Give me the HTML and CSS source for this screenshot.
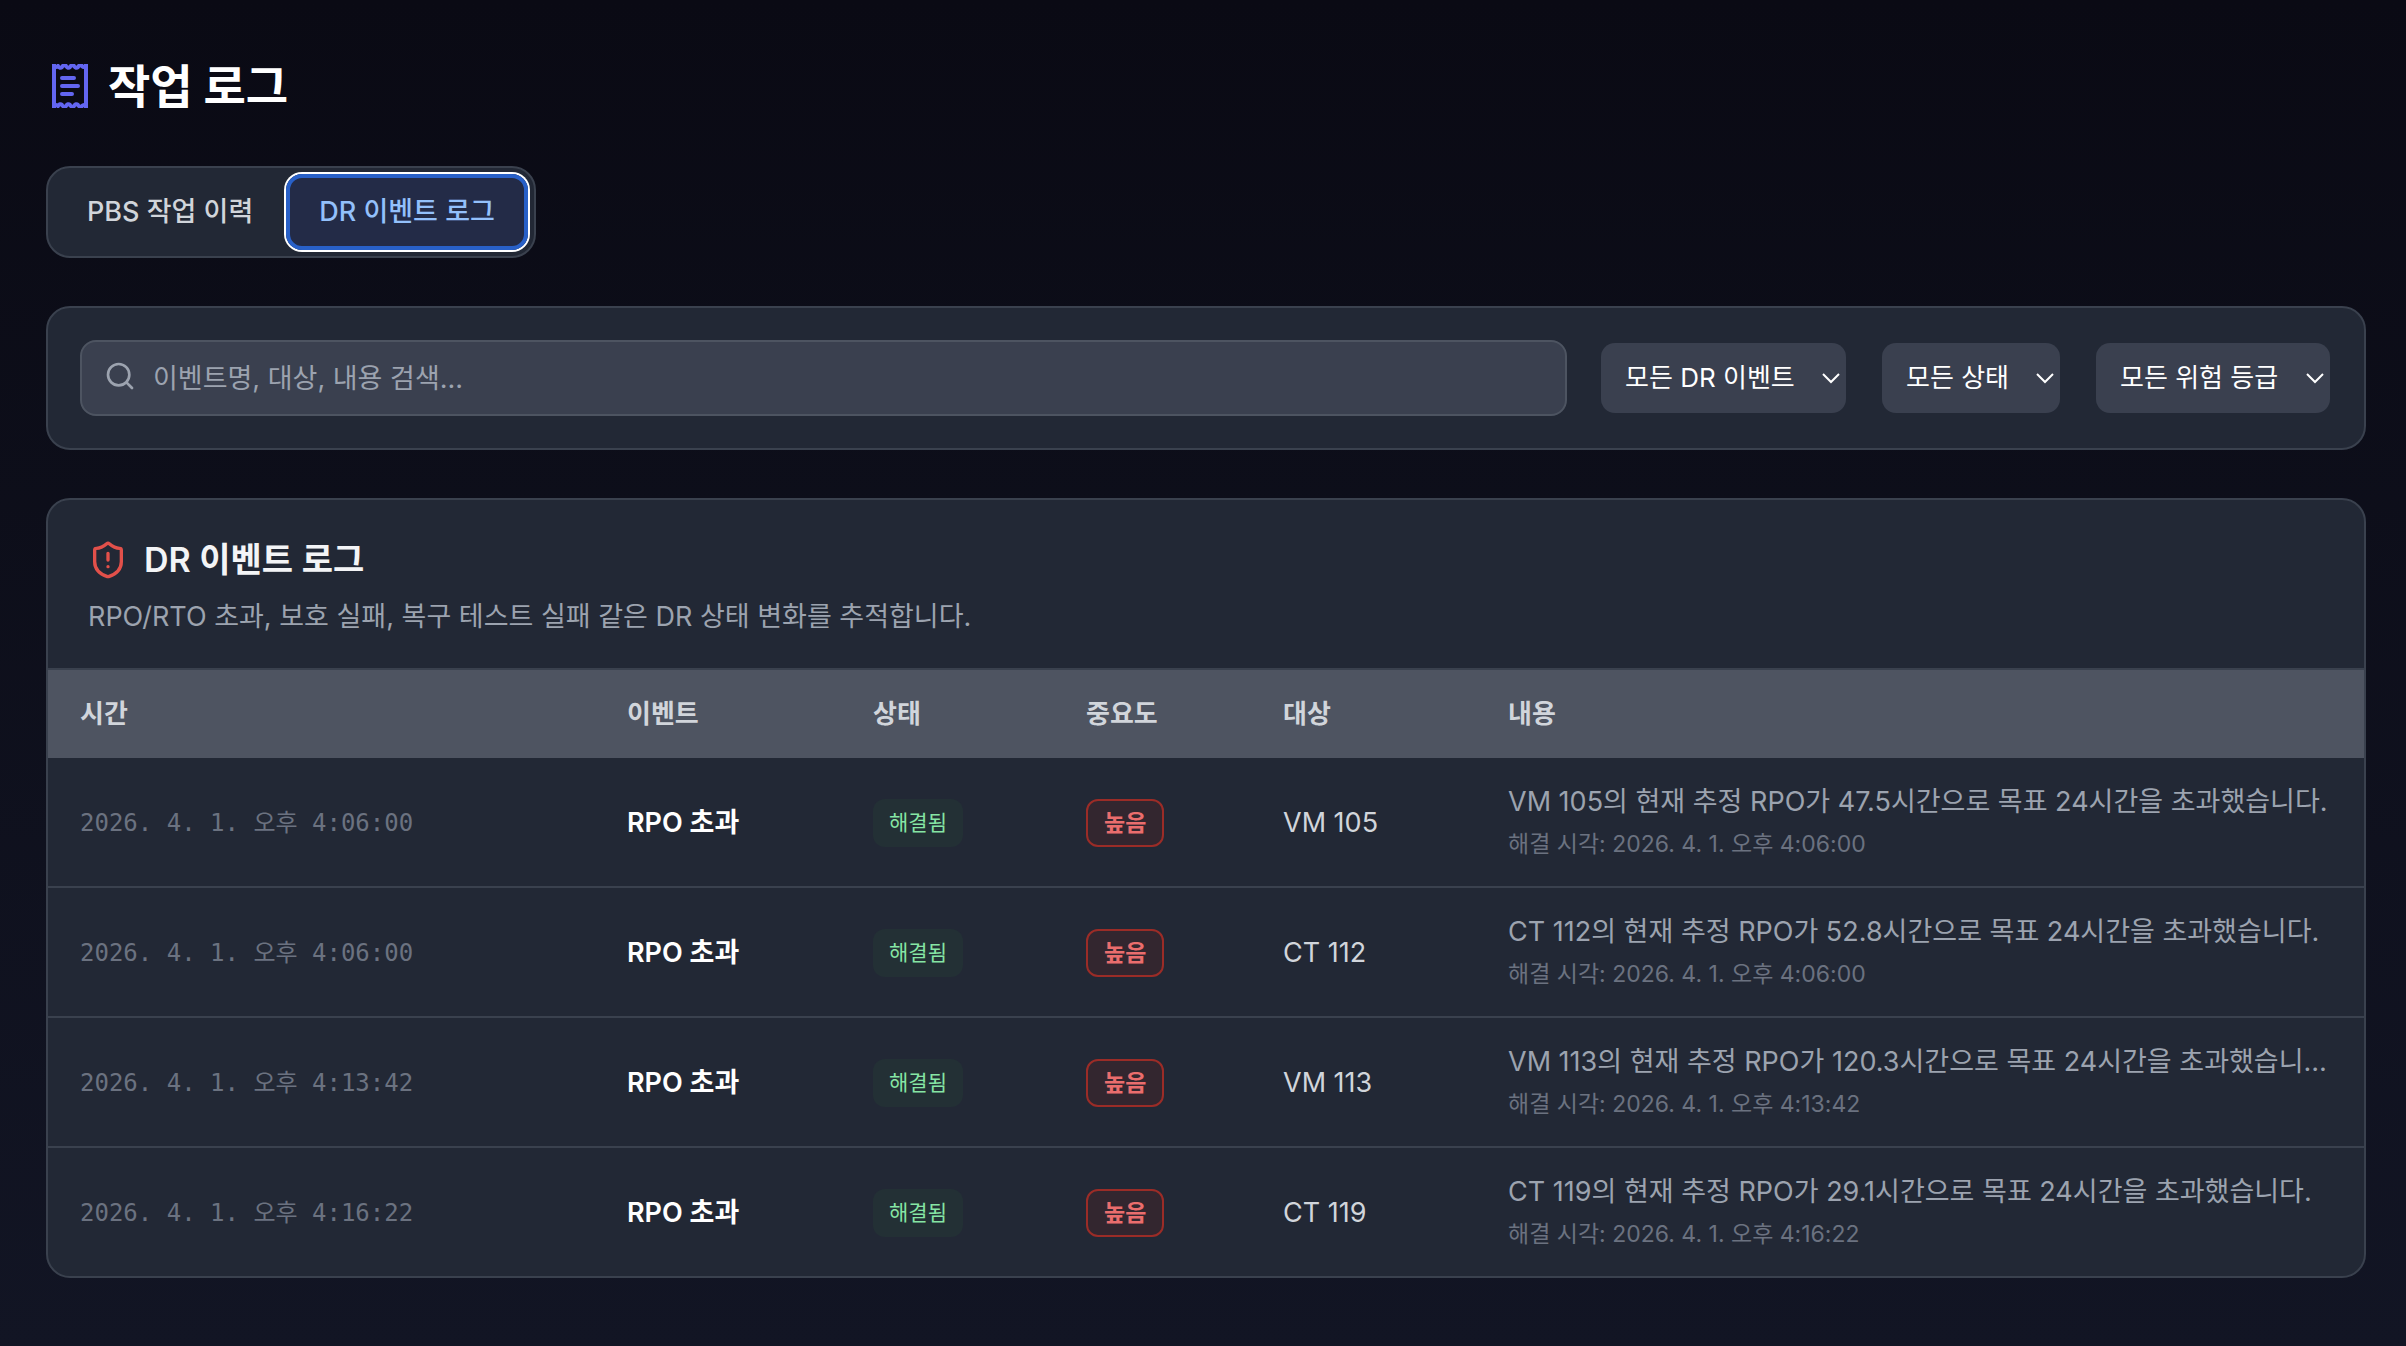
FILE: index.html
```html
<!DOCTYPE html>
<html lang="ko">

<head>
    <meta charset="UTF-8">
    <meta name="viewport" content="width=device-width, initial-scale=1.0">
    <title>작업 로그</title>
    <link rel="stylesheet" href="styles.css">
</head>

<body>
    <main>
        <header class="page-title">
            <svg class="title-icon" viewBox="0 0 36 44" fill="none" stroke="currentColor" stroke-width="4" stroke-linecap="round">
                <path d="M2 2V42M34 2V42" stroke-linecap="square" />
                <path d="M2 2q2 2 4 0q2 3 4 1q2-3 4-1q2 3 4 1q2-3 4-1q2 3 4 1q2-3 4-1q2 2 4 0" />
                <path d="M2 42q2-2 4 0q2-3 4-1q2 3 4 1q2-3 4-1q2 3 4 1q2-3 4-1q2 3 4 1q2-2 4 0" />
                <path d="M10 14h12M10 22h16M10 30h10" />
            </svg>
            <h1>작업 로그</h1>
        </header>

        <div class="tabs">
            <button type="button" class="tab">PBS 작업 이력</button>
            <button type="button" class="tab active">DR 이벤트 로그</button>
        </div>

        <section class="card filters">
            <div class="search">
                <svg class="search-icon" viewBox="0 0 24 24" fill="none" stroke="currentColor" stroke-width="2" stroke-linecap="round">
                    <circle cx="11" cy="11" r="8" />
                    <path d="m21 21-4-4" />
                </svg>
                <input type="text" aria-label="검색" placeholder="이벤트명, 대상, 내용 검색...">
            </div>
            <div class="select">
                <select aria-label="DR 이벤트">
                    <option>모든 DR 이벤트</option>
                </select>
                <svg class="chevron" viewBox="0 0 18 12" fill="none" stroke="currentColor" stroke-width="2"><path d="M1 2l8 8 8-8" /></svg>
            </div>
            <div class="select">
                <select aria-label="상태">
                    <option>모든 상태</option>
                </select>
                <svg class="chevron" viewBox="0 0 18 12" fill="none" stroke="currentColor" stroke-width="2"><path d="M1 2l8 8 8-8" /></svg>
            </div>
            <div class="select">
                <select aria-label="위험 등급">
                    <option>모든 위험 등급</option>
                </select>
                <svg class="chevron" viewBox="0 0 18 12" fill="none" stroke="currentColor" stroke-width="2"><path d="M1 2l8 8 8-8" /></svg>
            </div>
        </section>

        <section class="card log">
            <div class="log-head">
                <h2>
                    <svg class="shield-icon" viewBox="0 0 24 24" fill="none" stroke="currentColor" stroke-width="2" stroke-linecap="round" stroke-linejoin="round">
                        <path d="M20 13c0 5-3.500 7.500-7.660 8.950a1 1 0 0 1-.67-.01C7.500 20.500 4 18 4 13V6a1 1 0 0 1 1-1c2 0 4.500-1.200 6.240-2.720a1.170 1.170 0 0 1 1.520 0C14.510 3.810 17 5 19 5a1 1 0 0 1 1 1z" />
                        <path d="M12 8v4M12 16h.01" />
                    </svg>
                    DR 이벤트 로그
                </h2>
                <p>RPO/RTO 초과, 보호 실패, 복구 테스트 실패 같은 DR 상태 변화를 추적합니다.</p>
            </div>
            <table>
                <colgroup>
                    <col class="col-time">
                    <col class="col-event">
                    <col class="col-status">
                    <col class="col-level">
                    <col class="col-target">
                    <col>
                </colgroup>
                <thead>
                    <tr>
                        <th>시간</th>
                        <th>이벤트</th>
                        <th>상태</th>
                        <th>중요도</th>
                        <th>대상</th>
                        <th>내용</th>
                    </tr>
                </thead>
                <tbody>
                    <tr>
                        <td class="time">2026. 4. 1. 오후 4:06:00</td>
                        <td class="event">RPO 초과</td>
                        <td><span class="badge resolved">해결됨</span></td>
                        <td><span class="badge high">높음</span></td>
                        <td>VM 105</td>
                        <td>
                            <div class="message">VM 105의 현재 추정 RPO가 47.5시간으로 목표 24시간을 초과했습니다.</div>
                            <div class="resolved-at">해결 시각: 2026. 4. 1. 오후 4:06:00</div>
                        </td>
                    </tr>
                    <tr>
                        <td class="time">2026. 4. 1. 오후 4:06:00</td>
                        <td class="event">RPO 초과</td>
                        <td><span class="badge resolved">해결됨</span></td>
                        <td><span class="badge high">높음</span></td>
                        <td>CT 112</td>
                        <td>
                            <div class="message">CT 112의 현재 추정 RPO가 52.8시간으로 목표 24시간을 초과했습니다.</div>
                            <div class="resolved-at">해결 시각: 2026. 4. 1. 오후 4:06:00</div>
                        </td>
                    </tr>
                    <tr>
                        <td class="time">2026. 4. 1. 오후 4:13:42</td>
                        <td class="event">RPO 초과</td>
                        <td><span class="badge resolved">해결됨</span></td>
                        <td><span class="badge high">높음</span></td>
                        <td>VM 113</td>
                        <td>
                            <div class="message">VM 113의 현재 추정 RPO가 120.3시간으로 목표 24시간을 초과했습니다.</div>
                            <div class="resolved-at">해결 시각: 2026. 4. 1. 오후 4:13:42</div>
                        </td>
                    </tr>
                    <tr>
                        <td class="time">2026. 4. 1. 오후 4:16:22</td>
                        <td class="event">RPO 초과</td>
                        <td><span class="badge resolved">해결됨</span></td>
                        <td><span class="badge high">높음</span></td>
                        <td>CT 119</td>
                        <td>
                            <div class="message">CT 119의 현재 추정 RPO가 29.1시간으로 목표 24시간을 초과했습니다.</div>
                            <div class="resolved-at">해결 시각: 2026. 4. 1. 오후 4:16:22</div>
                        </td>
                    </tr>
                </tbody>
            </table>
        </section>
    </main>
</body>

</html>
```

FILE: styles.css
```css
* {
    padding: 0;
    margin: 0;
    box-sizing: border-box;
}

body {
    min-height: 100vh;
    background: linear-gradient(#0a0a14, #121524);
    color: #d1d5db;
    font-family: Inter, "Noto Sans CJK KR", sans-serif;
    font-size: 27px;
    line-height: 38px;
}

button,
input,
select {
    font: inherit;
    color: inherit;
}

main {
    display: flex;
    flex-direction: column;
    gap: 48px;
    padding: 52px 40px 68px 46px;
}

/* title */
.page-title {
    display: flex;
    align-items: center;
    gap: 20px;
    padding: 2px 0 0 6px;
    height: 66px;
    color: #fff;
}

.title-icon {
    width: 36px;
    height: 44px;
    color: #6366f1;
}

h1 {
    font-size: 46px;
    font-weight: 700;
}

/* tabs */
.tabs {
    display: flex;
    align-self: flex-start;
    padding: 6px;
    background: #222835;
    border: 2px solid #3a414e;
    border-radius: 24px;
}

.tab {
    height: 76px;
    padding: 0 33px;
    background: none;
    border: 0;
    border-radius: 16px;
    font-weight: 500;
}

.tab.active {
    background: #232b47;
    color: #93c0fb;
    box-shadow: 0 0 0 2px #fff, inset 0 0 0 4px #2860c8;
}

/* cards */
.card {
    background: #222835;
    border: 2px solid #3a414e;
    border-radius: 24px;
    overflow: hidden;
}

.filters {
    display: flex;
    align-items: center;
    gap: 32px;
    padding: 32px;
}

.search {
    position: relative;
    flex: 1;
}

.search input {
    display: block;
    width: 100%;
    height: 76px;
    padding: 0 24px 0 71px;
    background: #3a404f;
    border: 2px solid #4d5461;
    border-radius: 16px;
}

.search input::placeholder {
    color: #9ca3af;
    opacity: 1;
}

.search-icon {
    position: absolute;
    left: 24px;
    top: 20px;
    width: 32px;
    height: 32px;
    color: #9ca3af;
}

.select {
    position: relative;
}

.select select {
    display: block;
    appearance: none;
    height: 74px;
    padding: 0 51px 0 24px;
    background: #3a404f;
    background-clip: padding-box;
    border: 2px solid transparent;
    border-radius: 16px;
    color: #fff;
    font-size: 26px;
}

.chevron {
    position: absolute;
    right: 8px;
    top: 31px;
    width: 18px;
    height: 12px;
    color: #fff;
    pointer-events: none;
}

/* event log */
.log-head {
    padding: 36px 40px 32px;
    border-bottom: 2px solid #3a414e;
}

h2 {
    display: flex;
    align-items: center;
    gap: 16px;
    height: 48px;
    font-size: 34px;
    font-weight: 600;
    color: #f3f4f6;
}

.shield-icon {
    width: 40px;
    height: 40px;
    color: #e2504a;
}

.log-head p {
    margin-top: 14px;
    color: #9ca3af;
}

table {
    width: 100%;
    table-layout: fixed;
    border-collapse: separate;
    border-spacing: 0;
    text-align: left;
}

.col-time {
    width: 547px;
}

.col-event {
    width: 246px;
}

.col-status {
    width: 213px;
}

.col-level {
    width: 197px;
}

.col-target {
    width: 225px;
}

th {
    height: 88px;
    padding: 0 32px;
    background: #4e5461;
    font-size: 26px;
    font-weight: 600;
}

td {
    height: 130px;
    padding: 2px 32px 0;
    border-bottom: 2px solid #3a414e;
}

tbody tr:last-child td {
    height: 128px;
    border-bottom: 0;
}

.time {
    font-family: "DejaVu Sans Mono", "Noto Sans CJK KR", monospace;
    font-size: 24px;
    color: #6b7280;
}

.event {
    font-weight: 600;
    color: #fff;
}

.badge {
    display: inline-block;
    padding: 0 16px;
    border-radius: 12px;
    line-height: 48px;
    vertical-align: middle;
}

.resolved {
    background: #233035;
    color: #86e5a4;
    font-size: 21px;
}

.high {
    background: #33262f;
    border: 2px solid #9b2c27;
    color: #ea6d6d;
    font-size: 23px;
    font-weight: 600;
    line-height: 44px;
}

.message {
    overflow: hidden;
    white-space: nowrap;
    text-overflow: ellipsis;
    color: #9ca3af;
}

.resolved-at {
    margin-top: 4px;
    font-size: 23px;
    color: #6b7280;
}
```
